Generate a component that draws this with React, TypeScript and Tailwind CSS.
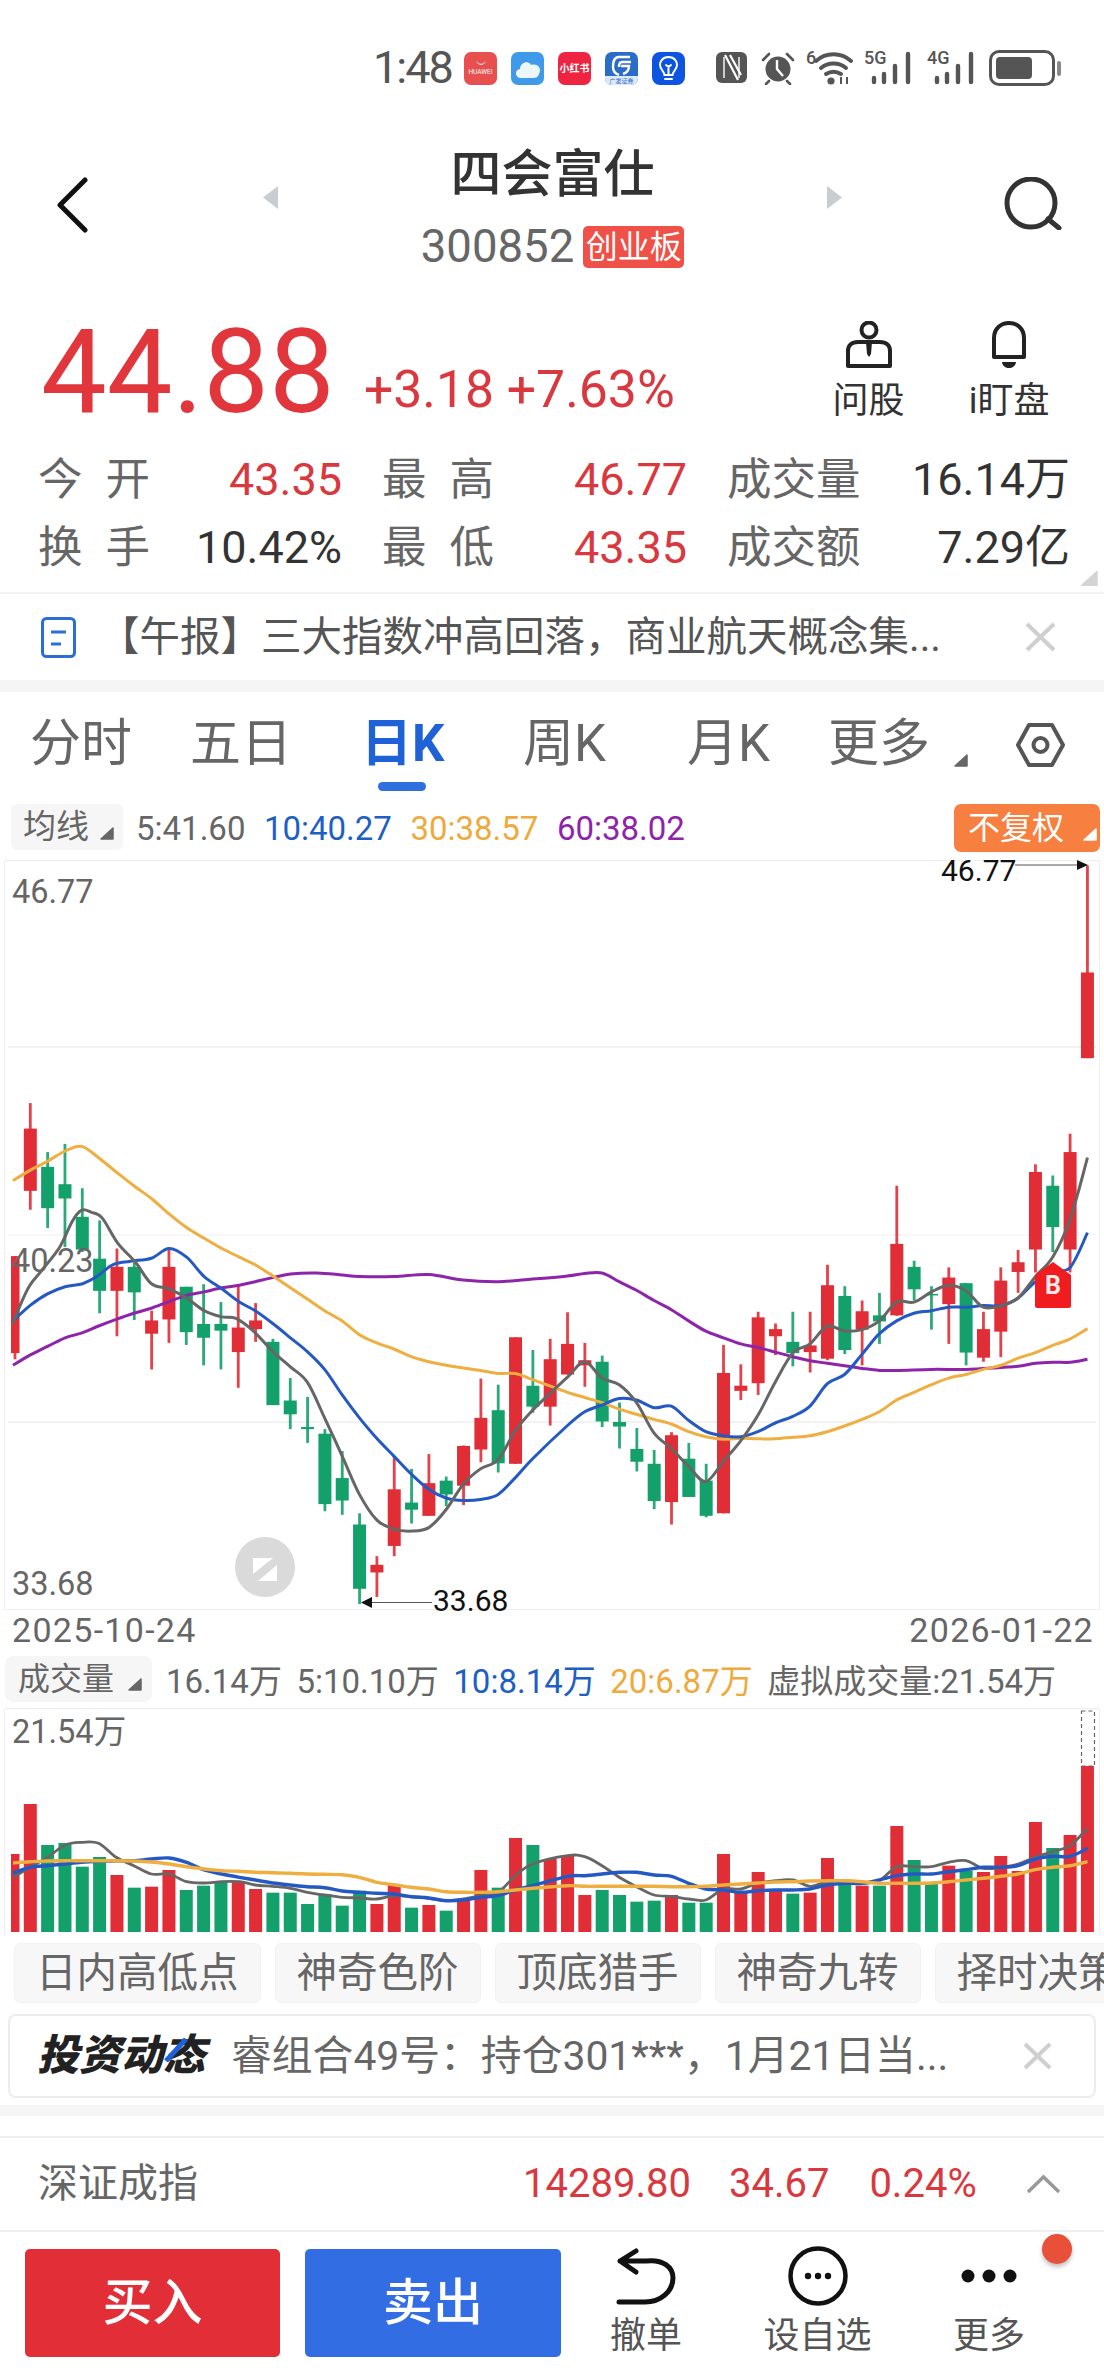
const RED = '#e12d36';
const GREEN = '#14a06a';

// [wickTop, bodyTop, bodyBottom, wickBottom, up, volumeTop], y values read off the zoomed crops
const bars: [number, number, number, number, number, number][] = [
  [798, 798, 988, 1000, 1, 765], [498, 548, 670, 707, 1, 615], [594, 623, 704, 743, 0, 738], [578, 657, 685, 780, 0, 732],
  [665, 721, 785, 790, 0, 803], [728, 803, 866, 910, 0, 774], [783, 819, 866, 955, 1, 828], [810, 819, 869, 923, 0, 866],
  [905, 924, 950, 1020, 1, 863], [785, 819, 922, 968, 1, 813], [858, 858, 947, 972, 0, 873], [853, 931, 958, 1012, 0, 860],
  [888, 931, 944, 1020, 0, 850], [856, 938, 986, 1056, 1, 848], [890, 924, 941, 966, 1, 870], [960, 966, 1090, 1090, 0, 881],
  [1037, 1081, 1108, 1137, 0, 881], [1074, 1133, 1137, 1164, 0, 915], [1137, 1146, 1284, 1298, 0, 885], [1180, 1233, 1277, 1305, 0, 920],
  [1302, 1324, 1450, 1480, 0, 875], [1386, 1403, 1418, 1466, 1, 915], [1190, 1255, 1366, 1386, 1, 855], [1215, 1281, 1295, 1322, 0, 926],
  [1186, 1243, 1307, 1307, 1, 918], [1230, 1238, 1265, 1288, 0, 935], [1169, 1170, 1248, 1286, 1, 900], [1038, 1115, 1177, 1202, 1, 813],
  [1050, 1100, 1204, 1222, 0, 866], [957, 957, 1205, 1205, 1, 717], [982, 1052, 1093, 1105, 0, 738], [960, 1000, 1093, 1130, 1, 780],
  [908, 970, 1030, 1030, 1, 770], [968, 1002, 1012, 1054, 1, 888], [993, 1005, 1122, 1133, 0, 873], [1085, 1123, 1132, 1175, 0, 888],
  [1135, 1176, 1201, 1220, 0, 908], [1178, 1205, 1278, 1294, 0, 905], [1143, 1149, 1280, 1324, 1, 888], [1164, 1195, 1270, 1270, 0, 911],
  [1205, 1238, 1307, 1310, 0, 911], [972, 1027, 1302, 1302, 1, 765], [1010, 1052, 1062, 1080, 1, 880], [907, 918, 1047, 1070, 1, 819],
  [930, 941, 955, 992, 1, 872], [907, 966, 988, 1014, 0, 884], [907, 973, 986, 1026, 1, 881], [815, 855, 999, 1002, 1, 777],
  [857, 876, 982, 990, 0, 855], [885, 906, 942, 1012, 1, 860], [870, 914, 926, 970, 0, 860], [660, 774, 914, 915, 1, 681],
  [807, 819, 863, 885, 0, 783], [857, 872, 875, 942, 0, 855], [820, 840, 892, 970, 1, 800], [851, 851, 987, 1012, 0, 815],
  [907, 941, 997, 1005, 1, 819], [820, 846, 946, 996, 1, 771], [786, 810, 829, 870, 1, 816], [618, 633, 785, 830, 1, 669],
  [640, 660, 741, 790, 0, 747], [558, 594, 785, 830, 1, 708], [32, 242, 410, 410, 1, 501],
];

const ma5 = '37,930 60,890 85,855 120,825 170,780 205,730 232,708 260,712 290,723 335,773 385,810 430,852 480,862 530,880 580,905 630,917 670,920 720,945 775,985 825,1015 873,1045 922,1115 972,1190 1021,1265 1070,1315 1119,1333 1170,1337 1218,1330 1267,1295 1316,1245 1365,1215 1415,1197 1464,1140 1513,1100 1612,1035 1661,1005 1710,1037 1759,1050 1808,1085 1858,1145 1907,1175 1956,1210 2005,1240 2055,1200 2104,1160 2153,1110 2202,1045 2252,988 2301,970 2350,935 2399,945 2449,942 2498,925 2547,888 2596,888 2646,868 2695,855 2744,866 2793,898 2843,895 2892,880 2941,838 2990,800 3040,725 3089,605';
const ma10 = '37,925 85,895 135,872 185,858 235,852 275,838 320,815 370,808 430,802 480,783 530,800 580,838 630,862 680,888 725,905 775,930 825,958 873,985 922,1020 972,1070 1021,1115 1070,1155 1119,1190 1168,1225 1218,1255 1267,1272 1316,1277 1365,1275 1415,1265 1464,1232 1513,1195 1612,1130 1661,1103 1710,1090 1759,1077 1808,1080 1858,1095 1907,1092 1956,1120 2005,1142 2055,1150 2104,1152 2153,1142 2202,1125 2252,1112 2301,1092 2350,1048 2399,1030 2449,990 2498,950 2547,925 2596,910 2646,905 2695,898 2744,898 2793,895 2843,895 2892,880 2941,848 2990,828 3040,820 3089,752';
const ma30 = '37,650 85,630 135,612 185,592 232,583 280,605 330,633 380,660 430,685 480,715 530,742 580,763 630,783 680,800 725,815 775,837 825,860 873,882 922,905 972,925 1021,952 1070,968 1119,980 1168,995 1218,1005 1267,1012 1316,1017 1365,1022 1415,1028 1464,1028 1513,1040 1612,1065 1661,1075 1710,1085 1759,1098 1808,1108 1858,1118 1907,1127 1956,1142 2005,1152 2055,1157 2104,1155 2153,1156 2202,1156 2252,1153 2301,1150 2350,1142 2399,1131 2449,1118 2498,1103 2547,1080 2596,1065 2646,1050 2695,1037 2744,1030 2793,1020 2843,1012 2892,998 2941,987 2990,973 3040,960 3089,940';
const ma60 = '37,1012 85,992 135,975 185,958 235,948 280,935 330,922 380,910 430,900 480,887 530,875 580,868 630,860 680,855 725,848 775,840 825,833 900,831 972,835 1021,838 1119,838 1218,834 1316,845 1415,848 1513,843 1612,837 1661,832 1710,831 1759,848 1808,865 1858,885 1907,903 1956,925 2005,945 2055,958 2104,970 2153,977 2202,986 2252,995 2301,1003 2350,1008 2399,1013 2449,1018 2498,1022 2547,1022 2646,1020 2744,1020 2843,1016 2892,1014 2941,1008 2990,1006 3040,1006 3089,1000';
const vol5 = '37,835 85,805 135,775 185,738 232,730 280,733 330,775 380,800 430,825 480,825 530,848 580,852 630,848 680,848 725,858 775,862 825,868 873,880 922,888 972,895 1021,897 1070,900 1119,890 1168,893 1218,898 1267,905 1316,900 1365,890 1415,880 1464,830 1513,795 1612,770 1661,773 1710,800 1759,835 1808,863 1858,888 1907,892 1956,900 2005,903 2055,870 2104,870 2153,852 2202,845 2252,843 2301,862 2350,848 2399,845 2449,852 2498,845 2547,803 2596,803 2646,803 2695,790 2744,785 2793,808 2843,805 2892,795 2941,775 2990,758 3040,740 3089,687';
const vol10 = '37,822 85,805 135,800 185,795 232,790 280,787 330,785 380,785 430,780 480,777 530,790 580,813 630,825 680,835 725,843 775,852 825,858 873,863 922,866 972,876 1021,880 1070,883 1119,885 1168,893 1218,897 1267,905 1316,903 1365,895 1415,890 1464,873 1513,860 1612,832 1661,830 1710,825 1759,820 1808,820 1858,828 1907,832 1956,853 2005,870 2055,873 2104,880 2153,875 2202,873 2252,873 2301,870 2350,858 2399,853 2449,853 2498,843 2547,830 2596,825 2646,825 2695,818 2744,812 2793,805 2843,805 2892,800 2941,780 2990,772 3040,772 3089,748';
const vol20 = '37,792 85,788 135,786 185,785 232,785 280,785 330,785 380,786 430,789 480,795 530,803 580,810 630,815 680,817 725,820 775,821 825,823 873,825 922,826 972,827 1021,835 1070,850 1119,857 1168,865 1218,870 1267,878 1316,880 1365,880 1415,878 1464,873 1513,868 1612,860 1661,862 1710,862 1759,862 1808,862 1858,862 1907,863 1956,863 2005,862 2055,858 2104,855 2153,852 2202,849 2252,848 2301,846 2350,845 2399,845 2449,848 2498,853 2547,853 2596,853 2646,852 2695,848 2744,843 2793,838 2843,832 2892,825 2941,812 2990,805 3040,800 3089,788';

const SX = 1568 / 552;
const barX = (i: number) => 30.3 + (i - 1) * 17.33;

function smooth(raw: string, yOf: (v: number) => number) {
  const p = raw.split(' ').map((s) => {
    const [x, y] = s.split(',').map(Number);
    return [x / SX, yOf(y)];
  });
  let d = `M${p[0][0].toFixed(1)} ${p[0][1].toFixed(1)}`;
  for (let i = 0; i < p.length - 1; i++) {
    const a = p[Math.max(i - 1, 0)];
    const b = p[i];
    const c = p[i + 1];
    const e = p[Math.min(i + 2, p.length - 1)];
    d += `C${(b[0] + (c[0] - a[0]) / 6).toFixed(1)} ${(b[1] + (c[1] - a[1]) / 6).toFixed(1)} ${(c[0] - (e[0] - b[0]) / 6).toFixed(1)} ${(c[1] - (e[1] - b[1]) / 6).toFixed(1)} ${c[0].toFixed(1)} ${c[1].toFixed(1)}`;
  }
  return d;
}

const priceY = (v: number) => 850 + v / 1.96;
const volY = (v: number) => 1600 + v / 3;

function Corner({ color = '#666', className = '' }: { color?: string; className?: string }) {
  return (
    <svg viewBox="0 0 14 13" className={className}>
      <path d="M13 1 V12 H1 Z" fill={color} stroke={color} strokeWidth="1.5" strokeLinejoin="round" />
    </svg>
  );
}

function Signal({ label }: { label: string }) {
  return (
    <div className="relative w-[49px] h-[34px]">
      <span className="absolute left-0 top-[-3px] text-[18px] leading-[20px] font-medium text-[#555]">{label}</span>
      <svg viewBox="0 0 49 34" className="absolute inset-0 w-[49px] h-[34px]">
        <g fill="none" stroke="#555" strokeWidth="4.4" strokeLinecap="round">
          <path d="M10 27 V31 M20 23 V31 M31 15 V31 M44 3 V31" />
        </g>
      </svg>
    </div>
  );
}

function StatusBar() {
  return (
    <div className="h-[110px] pt-[50px] pl-[373px] flex items-start">
      <div className="w-[78px] text-[45px] leading-[36px] tracking-[-2px] text-[#555]">1:48</div>
      <div className="ml-[13px] w-[33px] h-[33px] rounded-[7px] bg-[#e8504f] flex flex-col items-center justify-center mt-[2px]">
        <svg viewBox="0 0 14 6" className="w-[12px] h-[5px] mb-[3px]"><path d="M2 1 C4 5 10 5 12 1" fill="none" stroke="#fff" strokeWidth="1.2" /></svg>
        <span className="text-[6.5px] leading-[7px] text-white">HUAWEI</span>
      </div>
      <div className="ml-[14px] w-[33px] h-[33px] rounded-[7px] bg-[#3f9bea] mt-[2px]">
        <svg viewBox="0 0 33 33" className="w-[33px] h-[33px]"><path d="M10 26 C4 26 3 18 9 17 C9 10 18 8 20 13 C27 11 31 17 28 22 C27 25 25 26 22 26 Z" fill="#eef6fd" /></svg>
      </div>
      <div className="ml-[14px] w-[33px] h-[33px] rounded-[7px] bg-[#ee2440] flex items-center justify-center mt-[2px]">
        <span className="text-[10px] leading-[12px] font-bold text-white whitespace-nowrap">小红书</span>
      </div>
      <div className="ml-[14px] w-[33px] h-[33px] rounded-[7px] bg-[#2b6cc8] mt-[2px] flex flex-col items-center overflow-hidden">
        <svg viewBox="0 0 33 24" className="w-[33px] h-[24px]"><path d="M25 5 H14 C8 5 8 12 8 15 C8 20 11 22 14 23 M26 10 H17 C14 10 14 13 14 15 M16 14 H24 C24 19 21 21 18 22" fill="none" stroke="#fff" strokeWidth="2.4" /></svg>
        <span className="w-full bg-[#dde9f8] text-[6px] leading-[9px] text-center text-[#2b6cc8]">广发证券</span>
      </div>
      <div className="ml-[14px] w-[33px] h-[33px] rounded-[8px] bg-[#0d55e0] mt-[2px]">
        <svg viewBox="0 0 33 33" className="w-[33px] h-[33px]"><path d="M16.5 5 C10 5 8 10 8 13 C8 17 12 19 12.5 23 H20.5 C21 19 25 17 25 13 C25 10 23 5 16.5 5 Z M13 27 H20 M16.5 23 V14 M14 13 L16.5 15 L19 13" fill="none" stroke="#fff" strokeWidth="2" strokeLinecap="round" /></svg>
      </div>
      <svg viewBox="0 0 31 33" className="ml-[31px] w-[31px] h-[33px] mt-[1px]">
        <rect x="0" y="1" width="31" height="31" rx="6" fill="#555" />
        <path d="M8 6 V27 M23 6 V27" stroke="#fff" strokeWidth="1.4" />
        <path d="M9 4 L22 29 M14 4 L25 24" stroke="#fff" strokeWidth="2.2" />
      </svg>
      <svg viewBox="0 0 36 34" className="ml-[13px] w-[36px] h-[34px] mt-[1px]">
        <circle cx="18" cy="18" r="12.5" fill="#555" />
        <path d="M3 9 L9 3 M33 9 L27 3 M9 30 L6 33 M27 30 L30 33" stroke="#555" strokeWidth="2.6" strokeLinecap="round" />
        <path d="M17 9 V18 L23 25" fill="none" stroke="#fff" strokeWidth="2.4" />
      </svg>
      <div className="relative ml-[10px] w-[47px] h-[34px] mt-[1px]">
        <span className="absolute left-0 top-[-3px] text-[18px] leading-[20px] font-medium text-[#555]">6</span>
        <svg viewBox="0 0 47 34" className="absolute inset-0 w-[47px] h-[34px]">
          <g fill="none" stroke="#555" strokeWidth="3.8" strokeLinecap="round">
            <path d="M10 10 C20 1 35 1 45 10 M15 17 C22 11 33 11 40 17 M20 23 C25 20 30 20 35 23" />
          </g>
          <circle cx="25" cy="30" r="3.6" fill="#555" />
          <path d="M35 26 V33 M41 26 V33" stroke="#555" strokeWidth="2" />
        </svg>
      </div>
      <div className="ml-[11px] mt-[1px]"><Signal label="5G" /></div>
      <div className="ml-[14px] mt-[1px]"><Signal label="4G" /></div>
      <div className="ml-[13px] flex items-center">
        <div className="w-[66px] h-[36px] rounded-[10px] border-[3px] border-[#555] p-[4px]">
          <div className="w-[36px] h-full rounded-[4px] bg-[#555]" />
        </div>
        <div className="ml-[2px] w-[4px] h-[15px] rounded-full bg-[#888]" />
      </div>
    </div>
  );
}

function Header() {
  return (
    <div className="h-[190px] flex items-start">
      <svg viewBox="0 0 32 56" className="ml-[56px] mt-[67px] w-[32px] h-[56px]">
        <path d="M29 3 L4 28 L29 53" fill="none" stroke="#111" strokeWidth="5" strokeLinecap="round" strokeLinejoin="round" />
      </svg>
      <svg viewBox="0 0 15 23" className="ml-[175px] mt-[76px] w-[15px] h-[23px]"><path d="M15 0 V23 L0 11.5 Z" fill="#c9cdd1" /></svg>
      <div className="w-[549px] flex flex-col items-center pt-[41px]">
        <div className="text-[51px] leading-[48px] font-medium text-[#333]">四会富仕</div>
        <div className="mt-[27px] flex items-center">
          <span className="text-[45.5px] leading-[42px] text-[#666]">300852</span>
          <span className="ml-[9px] w-[101px] h-[42px] rounded-[5px] bg-[#ef5148] text-white text-[32px] leading-[42px] text-center">创业板</span>
        </div>
      </div>
      <svg viewBox="0 0 15 23" className="mt-[76px] w-[15px] h-[23px]"><path d="M0 0 V23 L15 11.5 Z" fill="#c9cdd1" /></svg>
      <svg viewBox="0 0 59 53" className="ml-[161px] mt-[67px] w-[59px] h-[53px]">
        <circle cx="28" cy="26" r="24" fill="none" stroke="#333" strokeWidth="5" />
        <path d="M45 42 L56 51" stroke="#333" strokeWidth="5" strokeLinecap="round" />
      </svg>
    </div>
  );
}

function Quote() {
  return (
    <div className="h-[146px] pl-[41px] pr-[56px] flex items-start">
      <div className="mt-[12px] text-[117px] leading-[120px] text-[#e0363c]">44.88</div>
      <div className="ml-[29px] mt-[60px] text-[51.7px] leading-[60px] text-[#d9383f] whitespace-nowrap">+3.18 +7.63%</div>
      <div className="ml-auto flex pt-[21px]">
        <div className="flex flex-col items-center w-[69px]">
          <svg viewBox="0 0 46 47" className="w-[46px] h-[47px]">
            <circle cx="23" cy="9" r="7.5" fill="none" stroke="#222" strokeWidth="4" />
            <path d="M2 45 V30 C2 24 6 21 12 21 H34 C40 21 44 24 44 30 V45 Z" fill="none" stroke="#222" strokeWidth="4" strokeLinejoin="round" />
            <path d="M20 21 H26 L25 33 L23 36 L21 33 Z" fill="#222" />
          </svg>
          <div className="mt-[15px] text-[36px] leading-[36px] text-[#333] whitespace-nowrap">问股</div>
        </div>
        <div className="ml-[67px] flex flex-col items-center w-[78px]">
          <svg viewBox="0 0 38 47" className="w-[38px] h-[47px]">
            <path d="M4 36 V17 C4 -3 34 -3 34 17 V36 Z" fill="none" stroke="#222" strokeWidth="4" strokeLinejoin="round" />
            <path d="M12 41 H26 C25 49 13 49 12 41 Z" fill="#222" />
          </svg>
          <div className="mt-[15px] text-[36px] leading-[36px] text-[#333] whitespace-nowrap">i盯盘</div>
        </div>
      </div>
    </div>
  );
}

function Stat({ label, value, red, spread }: { label: string; value: string; red?: boolean; spread?: boolean }) {
  return (
    <div className="flex items-center justify-between">
      <div className={`flex text-[44.5px] leading-[68px] text-[#666] ${spread ? 'w-[112px] justify-between' : ''}`}>
        {spread ? label.split('').map((c) => <span key={c}>{c}</span>) : label}
      </div>
      <div className={`text-[45px] leading-[68px] ${red ? 'text-[#d9383f]' : 'text-[#333]'}`}>{value}</div>
    </div>
  );
}

function Stats() {
  return (
    <div className="relative h-[148px] pl-[38px] border-b-2 border-[#f2f2f2]">
      <div className="grid grid-cols-[304px_305px_343px] gap-x-[40px]">
        <Stat label="今开" value="43.35" red spread />
        <Stat label="最高" value="46.77" red spread />
        <Stat label="成交量" value="16.14万" />
        <Stat label="换手" value="10.42%" spread />
        <Stat label="最低" value="43.35" red spread />
        <Stat label="成交额" value="7.29亿" />
      </div>
      <Corner color="#d4d4d4" className="absolute right-[6px] bottom-[5px] w-[17px] h-[17px]" />
    </div>
  );
}

function NewsStrip() {
  return (
    <div className="h-[86px] flex items-center pl-[41px]">
      <svg viewBox="0 0 35 41" className="w-[35px] h-[41px]">
        <rect x="1.5" y="1.5" width="32" height="38" rx="4" fill="none" stroke="#2b6fd4" strokeWidth="3" />
        <path d="M10 15 H25 M10 27 H20" stroke="#2b6fd4" strokeWidth="3" />
      </svg>
      <div className="ml-[23px] w-[926px] text-[40.5px] leading-[50px] text-[#555] whitespace-nowrap">【午报】三大指数冲高回落，商业航天概念集...</div>
      <svg viewBox="0 0 31 30" className="w-[31px] h-[30px]">
        <path d="M2 2 L29 28 M29 2 L2 28" stroke="#cfcfcf" strokeWidth="4" />
      </svg>
    </div>
  );
}

function Tabs() {
  return (
    <div className="h-[102px] pt-[28px] pl-[30px] flex items-start text-[51px] leading-[48px] text-[#666]">
      <div className="w-[160px]">分时</div>
      <div className="w-[171px]">五日</div>
      <div className="w-[162px] flex flex-col">
        <span className="font-bold text-[#1f62d8]">日K</span>
        <span className="ml-[17px] mt-[14px] w-[48px] h-[9px] rounded-full bg-[#2f6fe0]" />
      </div>
      <div className="w-[164px]">周K</div>
      <div className="w-[141px]">月K</div>
      <div className="w-[126px]">更多</div>
      <Corner className="mt-[34px] w-[14px] h-[13px]" />
      <svg viewBox="0 0 49 44" className="ml-[48px] mt-[3px] w-[49px] h-[44px]">
        <path d="M13 2 H36 L47 22 L36 42 H13 L2 22 Z" fill="none" stroke="#555" strokeWidth="4" strokeLinejoin="round" />
        <circle cx="24.5" cy="22" r="7" fill="none" stroke="#555" strokeWidth="4" />
      </svg>
    </div>
  );
}

function MaRow() {
  return (
    <div className="h-[66px] pt-[10px] pl-[11px] pr-[4px] flex items-start">
      <div className="w-[112px] h-[46px] rounded-[6px] bg-[#f6f6f6] flex items-center pl-[12px] text-[33px] leading-[46px] text-[#666]">
        均线
        <Corner className="ml-[11px] mt-[12px] w-[14px] h-[13px]" />
      </div>
      <div className="ml-[13px] flex gap-x-[18.5px] text-[33px] leading-[50px]">
        <span className="text-[#666]">5:41.60</span>
        <span className="text-[#1e5fc4]">10:40.27</span>
        <span className="text-[#eeaa3c]">30:38.57</span>
        <span className="text-[#8e24aa]">60:38.02</span>
      </div>
      <div className="ml-auto w-[146px] h-[48px] rounded-[7px] bg-[#f77f3f] flex items-center pl-[14px] text-[32px] leading-[48px] text-white">
        不复权
        <Corner color="#fff" className="ml-[19px] mt-[12px] w-[14px] h-[13px]" />
      </div>
    </div>
  );
}

function PriceChart() {
  return (
    <div className="relative mx-[4px] h-[750px] border border-[#eeeeee]">
      <svg viewBox="4 861 1096 750" className="absolute left-[-1px] top-[-1px] w-[1096px] h-[750px]">
        <path d="M8 1048 H1096 M8 1423 H1096" stroke="#e6e6e6" strokeWidth="1.2" />
        <path d="M8 1236 H1096" stroke="#efefef" strokeWidth="1.2" />
        {bars.map((b, i) => {
          const x = barX(i);
          const c = b[4] ? RED : GREEN;
          return (
            <g key={i}>
              <rect x={(i === 0 ? 15 : x) - 1.4} y={priceY(b[0])} width="2.8" height={priceY(b[3]) - priceY(b[0])} fill={c} opacity="0.9" />
              <rect
                x={i === 0 ? 11 : x - 6.5}
                y={priceY(b[1])}
                width={i === 0 ? 8.5 : 13}
                height={Math.max(priceY(b[2]) - priceY(b[1]), 1.5)}
                fill={c}
              />
            </g>
          );
        })}
        <path d={smooth(ma60, priceY)} fill="none" stroke="#8e24aa" strokeWidth="3" />
        <path d={smooth(ma30, priceY)} fill="none" stroke="#efae40" strokeWidth="3" />
        <path d={smooth(ma10, priceY)} fill="none" stroke="#2459c4" strokeWidth="3" />
        <path d={smooth(ma5, priceY)} fill="none" stroke="#666" strokeWidth="3" />
        <path d="M1015 866 H1078" stroke="#555" strokeWidth="1.2" />
        <path d="M1077 861 L1088 866 L1077 871 Z" fill="#111" />
        <path d="M371 1603.5 H432" stroke="#555" strokeWidth="1.2" />
        <path d="M372 1598 L361 1603.5 L372 1609 Z" fill="#111" />
        <circle cx="265" cy="1568" r="30" fill="#dadada" />
        <path d="M253 1559 H273 L253 1575 Z M277 1566 V1582 H258 Z" fill="#fff" />
        <path d="M1035 1276 L1053 1263 L1071 1276 V1307 Q1071 1309 1069 1309 H1037 Q1035 1309 1035 1307 Z" fill="#f01c1f" />
        <text x="1053" y="1295" textAnchor="middle" fontSize="25" fontWeight="700" fill="#fde8e8">B</text>
      </svg>
      <span className="absolute left-[7px] top-[11px] text-[32.5px] leading-[40px] text-[#666]">46.77</span>
      <span className="absolute left-[7px] top-[380px] text-[32.5px] leading-[40px] text-[#666]">40.23</span>
      <span className="absolute left-[7px] top-[703px] text-[32.5px] leading-[40px] text-[#666]">33.68</span>
      <span className="absolute left-[936px] top-[-10px] text-[30px] leading-[40px] text-[#111]">46.77</span>
      <span className="absolute left-[428px] top-[720px] text-[30px] leading-[40px] text-[#111]">33.68</span>
    </div>
  );
}

function VolumeRow() {
  return (
    <div className="h-[52px] pl-[5px] flex items-start">
      <div className="w-[147px] h-[46px] rounded-[8px] bg-[#f6f6f6] flex items-center pl-[13px] text-[32px] leading-[46px] text-[#666]">
        成交量
        <Corner className="ml-[14px] mt-[10px] w-[14px] h-[13px]" />
      </div>
      <div className="ml-[14px] mt-[6px] flex gap-x-[14.5px] text-[33px] leading-[40px] whitespace-nowrap">
        <span className="text-[#666]">16.14万</span>
        <span className="text-[#666]">5:10.10万</span>
        <span className="text-[#1e5fc4]">10:8.14万</span>
        <span className="text-[#eeaa3c]">20:6.87万</span>
        <span className="text-[#666]">虚拟成交量:21.54万</span>
      </div>
    </div>
  );
}

function VolumeChart() {
  return (
    <div className="relative mx-[4px] h-[227px] border border-b-0 border-[#eeeeee]">
      <svg viewBox="4 1709 1096 227" className="absolute left-[-1px] top-[-1px] w-[1096px] h-[227px]">
        {bars.map((b, i) => (
          <rect
            key={i}
            x={i === 0 ? 11 : barX(i) - 6.5}
            y={volY(b[5])}
            width={i === 0 ? 8.5 : 13}
            height={1933 - volY(b[5])}
            fill={b[4] ? RED : GREEN}
          />
        ))}
        <rect x="1081.5" y="1712" width="13" height="55" fill="none" stroke="#666" strokeWidth="1.2" strokeDasharray="4 3" />
        <path d={smooth(vol5, volY)} fill="none" stroke="#666" strokeWidth="2.8" />
        <path d={smooth(vol10, volY)} fill="none" stroke="#2459c4" strokeWidth="3.4" />
        <path d={smooth(vol20, volY)} fill="none" stroke="#efae40" strokeWidth="3.4" />
      </svg>
      <span className="absolute left-[7px] top-[3px] text-[32.5px] leading-[40px] text-[#666]">21.54万</span>
    </div>
  );
}

const chips = ['日内高低点', '神奇色阶', '顶底猎手', '神奇九转', '择时决策'];

function Chips() {
  return (
    <div className="mt-[8px] pl-[14px] flex gap-x-[14px] overflow-hidden">
      {chips.map((c) => (
        <div key={c} className="shrink-0 h-[60px] px-[21px] rounded-[6px] bg-[#f7f7f7] border border-[#f1f1f1] text-[40.5px] leading-[58px] text-[#666] whitespace-nowrap">
          {c}
        </div>
      ))}
    </div>
  );
}

function Dynamics() {
  return (
    <div className="relative mt-[11px] mx-[8px] h-[84px] rounded-[8px] border-2 border-[#ececec] flex items-center pl-[27px]">
      <span className="text-[42px] leading-[50px] font-black italic text-[#222] whitespace-nowrap">投资动态</span>
      <svg viewBox="0 0 30 24" className="absolute left-[150px] top-[22px] w-[30px] h-[24px]">
        <path d="M26 1 L6 23" stroke="#1f62d8" strokeWidth="5" />
      </svg>
      <span className="ml-[26px] w-[792px] text-[40.8px] leading-[50px] text-[#666] whitespace-nowrap">睿组合49号：持仓301***，1月21日当...</span>
      <svg viewBox="0 0 29 28" className="w-[29px] h-[28px]">
        <path d="M2 2 L27 26 M27 2 L2 26" stroke="#cfcfcf" strokeWidth="4" />
      </svg>
    </div>
  );
}

function IndexRow() {
  return (
    <div className="mt-[20px] h-[96px] border-y-2 border-[#f0f0f0] flex items-center pl-[38px]">
      <span className="text-[40px] leading-[50px] text-[#666]">深证成指</span>
      <div className="ml-[325px] flex text-[40px] leading-[50px] text-[#d9383f]">
        <span>14289.80</span>
        <span className="ml-[38px]">34.67</span>
        <span className="ml-[40px]">0.24%</span>
      </div>
      <svg viewBox="0 0 35 20" className="ml-[49px] w-[35px] h-[20px]">
        <path d="M2 18 L17.5 3 L33 18" fill="none" stroke="#999" strokeWidth="3.5" />
      </svg>
    </div>
  );
}

function Footer() {
  return (
    <div className="relative flex items-start pl-[25px]">
      <div className="mt-[17px] w-[255px] h-[108px] rounded-[5px] bg-[#e22e36] text-white text-[50px] leading-[108px] font-medium text-center">买入</div>
      <div className="mt-[17px] ml-[25px] w-[256px] h-[108px] rounded-[5px] bg-[#326de4] text-white text-[50px] leading-[108px] font-medium text-center">卖出</div>
      <div className="ml-[50px] mt-[14px] w-[70px] flex flex-col items-center">
        <svg viewBox="0 0 60 60" className="w-[60px] h-[60px]">
          <path d="M20 5 L4 15 L20 26 M4 15 H30 C47 13 57 21 57 32 C57 45 45 56 29 56 H3" fill="none" stroke="#111" strokeWidth="5" strokeLinecap="round" strokeLinejoin="round" />
        </svg>
        <div className="mt-[12px] text-[36px] leading-[36px] text-[#555] whitespace-nowrap">撤单</div>
      </div>
      <div className="ml-[84px] mt-[14px] w-[105px] flex flex-col items-center">
        <svg viewBox="0 0 60 60" className="w-[60px] h-[60px]">
          <circle cx="30" cy="30" r="27.5" fill="none" stroke="#111" strokeWidth="4.5" />
          <circle cx="20" cy="30" r="3.2" fill="#111" />
          <circle cx="30" cy="30" r="3.2" fill="#111" />
          <circle cx="40" cy="30" r="3.2" fill="#111" />
        </svg>
        <div className="mt-[12px] text-[36px] leading-[36px] text-[#555] whitespace-nowrap">设自选</div>
      </div>
      <div className="ml-[84px] mt-[14px] w-[70px] flex flex-col items-center">
        <svg viewBox="0 0 60 60" className="w-[60px] h-[60px]">
          <circle cx="9" cy="30" r="6.5" fill="#111" />
          <circle cx="30" cy="30" r="6.5" fill="#111" />
          <circle cx="51" cy="30" r="6.5" fill="#111" />
        </svg>
        <div className="mt-[12px] text-[36px] leading-[36px] text-[#555] whitespace-nowrap">更多</div>
      </div>
      <div className="absolute left-[1042px] top-[2px] w-[30px] h-[30px] rounded-full bg-[#e8503a] shadow-[0_3px_4px_rgba(0,0,0,0.25)]" />
    </div>
  );
}

export default function App() {
  return (
    <div className="w-[1104px] h-[2376px] bg-white overflow-hidden font-[Roboto,'Noto_Sans_CJK_SC',sans-serif]">
      <StatusBar />
      <Header />
      <Quote />
      <Stats />
      <NewsStrip />
      <div className="h-[12px] bg-[#f5f5f5]" />
      <Tabs />
      <MaRow />
      <PriceChart />
      <div className="h-[46px] pl-[12px] pr-[10px] flex justify-between text-[34px] leading-[40px] tracking-[1.3px] text-[#666]">
        <span>2025-10-24</span>
        <span>2026-01-22</span>
      </div>
      <VolumeRow />
      <VolumeChart />
      <Chips />
      <Dynamics />
      <div className="mt-[7px] h-[11px] bg-[#f5f5f5]" />
      <IndexRow />
      <Footer />
    </div>
  );
}
